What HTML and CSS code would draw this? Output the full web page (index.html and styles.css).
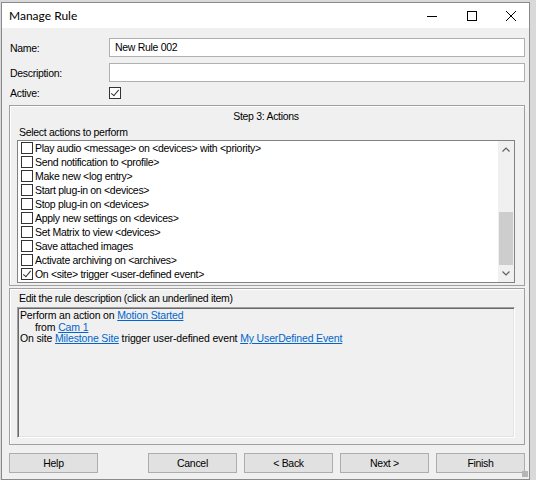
FILE: index.html
```html
<!DOCTYPE html>
<html lang="en">
<head>
<meta charset="UTF-8">
<title>Manage Rule</title>
<link rel="stylesheet" href="styles.css">
</head>
<body>
<div class="window">
    <div class="titlebar">
        <span class="title">Manage Rule</span>
        <div class="controls">
            <span class="ctl"><svg width="10" height="10" viewBox="0 0 10 10"><path d="M0 5.5h10" stroke="#000" stroke-width="1"/></svg></span>
            <span class="ctl"><svg width="10" height="10" viewBox="0 0 10 10"><rect x="0.5" y="0.5" width="9" height="9" fill="none" stroke="#000"/></svg></span>
            <span class="ctl close"><svg width="10" height="10" viewBox="0 0 10 10"><path d="M0 0L10 10M10 0L0 10" stroke="#000" stroke-width="1"/></svg></span>
        </div>
    </div>

    <div class="content">
        <div class="form">
            <span class="label">Name:</span>
            <div class="textbox">New Rule 002</div>
            <span class="label">Description:</span>
            <div class="textbox"></div>
            <span class="label active-label">Active:</span>
            <span class="check checked active-check"></span>
        </div>

        <div class="group actions">
            <div class="group-title">Step 3: Actions</div>
            <div class="caption">Select actions to perform</div>
            <div class="listbox">
                <ul class="items">
                    <li><span class="check"></span>Play audio &lt;message&gt; on &lt;devices&gt; with &lt;priority&gt;</li>
                    <li><span class="check"></span>Send notification to &lt;profile&gt;</li>
                    <li><span class="check"></span>Make new &lt;log entry&gt;</li>
                    <li><span class="check"></span>Start plug-in on &lt;devices&gt;</li>
                    <li><span class="check"></span>Stop plug-in on &lt;devices&gt;</li>
                    <li><span class="check"></span>Apply new settings on &lt;devices&gt;</li>
                    <li><span class="check"></span>Set Matrix to view &lt;devices&gt;</li>
                    <li><span class="check"></span>Save attached images</li>
                    <li><span class="check"></span>Activate archiving on &lt;archives&gt;</li>
                    <li><span class="check checked"></span>On &lt;site&gt; trigger &lt;user-defined event&gt;</li>
                </ul>
                <div class="scrollbar">
                    <span class="arrow"><svg width="8" height="5" viewBox="0 0 8 5"><path d="M0.5 4.5L4 1L7.5 4.5" fill="none" stroke="#606060" stroke-width="1.2"/></svg></span>
                    <div class="track"><div class="thumb"></div></div>
                    <span class="arrow"><svg width="8" height="5" viewBox="0 0 8 5"><path d="M0.5 0.5L4 4L7.5 0.5" fill="none" stroke="#606060" stroke-width="1.2"/></svg></span>
                </div>
            </div>
        </div>

        <div class="group description">
            <div class="caption">Edit the rule description (click an underlined item)</div>
            <div class="desc-box">
                <div>Perform an action on <a href="#">Motion Started</a></div>
                <div class="indent">from <a href="#">Cam 1</a></div>
                <div>On site <a href="#">Milestone Site</a> trigger user-defined event <a href="#">My UserDefined Event</a></div>
            </div>
        </div>

        <div class="buttons">
            <button class="btn">Help</button>
            <div class="nav">
                <button class="btn">Cancel</button>
                <button class="btn">&lt; Back</button>
                <button class="btn">Next &gt;</button>
                <button class="btn">Finish</button>
            </div>
        </div>
    </div>
    <span class="grip"></span>
</div>
</body>
</html>
```

FILE: styles.css
```css
body {
    margin: 0;
    padding: 0;
    background-color: #d9d9d9;
    font-family: "Liberation Sans", Arial, sans-serif;
    font-size: 10.5px;
    letter-spacing: -0.3px;
    color: #000;
}

.window {
    position: relative;
    margin: 2px 0 0 1px;
    width: 527px;
    height: 476px;
    border: 1px solid #8a8a8a;
    background-color: #f0f0f0;
    display: flex;
    flex-direction: column;
}

.titlebar {
    height: 25px;
    background-color: #fff;
    display: flex;
    align-items: center;
    justify-content: space-between;
}

.title {
    padding-left: 7px;
    font-family: Lato, "Noto Sans", sans-serif;
    font-size: 12px;
    letter-spacing: 0;
}

.controls {
    display: flex;
    height: 100%;
}

.ctl {
    width: 40px;
    display: flex;
    align-items: center;
    justify-content: center;
}

.ctl.close {
    width: 37px;
}

.content {
    padding: 10px 4px 0 7px;
    display: flex;
    flex-direction: column;
}

/* top form */
.form {
    display: grid;
    grid-template-columns: 100px 1fr;
    grid-template-rows: 19px 19px 12px;
    row-gap: 6px;
    align-items: center;
}

.label {
    padding-left: 1px;
}

.active-label,
.active-check {
    margin-top: -2px;
}

.textbox {
    height: 17px;
    line-height: 17px;
    border: 1px solid #b0b0b0;
    background-color: #fff;
    padding-left: 5px;
}

.check {
    display: inline-block;
    box-sizing: border-box;
    width: 12px;
    height: 12px;
    border: 1px solid #333;
    background-color: #fff;
    position: relative;
}

.check.checked::after {
    content: "";
    position: absolute;
    left: 3px;
    top: 0px;
    width: 3px;
    height: 7px;
    border: solid #333;
    border-width: 0 1px 1px 0;
    transform: rotate(40deg);
}

/* group boxes */
.group {
    border: 1px solid #a0a0a0;
    box-shadow: inset 1px 1px 0 #fff;
    padding: 0 9px 0 7px;
}

.actions {
    margin-top: 5px;
    padding-top: 4px;
    padding-bottom: 2px;
}

.group-title {
    text-align: center;
    line-height: 13px;
}

.caption {
    line-height: 13px;
    padding-left: 2px;
}

.actions .caption {
    margin-top: 3px;
}

.listbox {
    margin-top: 1px;
    height: 141px;
    border: 1px solid #828282;
    background-color: #fff;
    display: flex;
}

.items {
    flex: 1;
    list-style: none;
    margin: 0;
    padding: 0;
}

.items li {
    height: 14px;
    display: flex;
    align-items: center;
    white-space: nowrap;
}

.items .check {
    margin: 0 2px 0 3px;
}

.scrollbar {
    width: 16px;
    background-color: #f0f0f0;
    display: flex;
    flex-direction: column;
}

.arrow {
    height: 17px;
    display: flex;
    align-items: center;
    justify-content: center;
}

.track {
    flex: 1;
    display: flex;
    flex-direction: column;
    justify-content: flex-end;
}

.thumb {
    height: 53px;
    margin: 0 1px;
    background-color: #cdcdcd;
}

.description {
    margin-top: 2px;
    padding-top: 3px;
    padding-bottom: 6px;
}

.desc-box {
    margin-top: 2px;
    height: 127px;
    border: 1px solid #a0a0a0;
    border-right-color: #fff;
    border-bottom-color: #fff;
    box-shadow: inset 1px 1px 0 #696969, inset -1px -1px 0 #e3e3e3;
    padding: 2px 0 0 2px;
    line-height: 11.5px;
    letter-spacing: -0.15px;
}

.desc-box .indent {
    padding-left: 15px;
}

.desc-box a {
    color: #0066cc;
}

/* bottom buttons */
.buttons {
    margin-top: 8px;
    display: flex;
    justify-content: space-between;
}

.nav {
    display: flex;
    gap: 7px;
}

.btn {
    width: 89px;
    height: 20px;
    padding: 0;
    border: 1px solid #adadad;
    background-color: #e1e1e1;
    font-family: "Liberation Sans", Arial, sans-serif;
    font-size: 10.5px;
    letter-spacing: -0.3px;
    color: #000;
}

.grip {
    position: absolute;
    right: 1px;
    bottom: 2px;
    width: 6px;
    height: 6px;
    background-image: radial-gradient(#b5b5b5 0.8px, transparent 1px);
    background-size: 2px 2px;
}
```
